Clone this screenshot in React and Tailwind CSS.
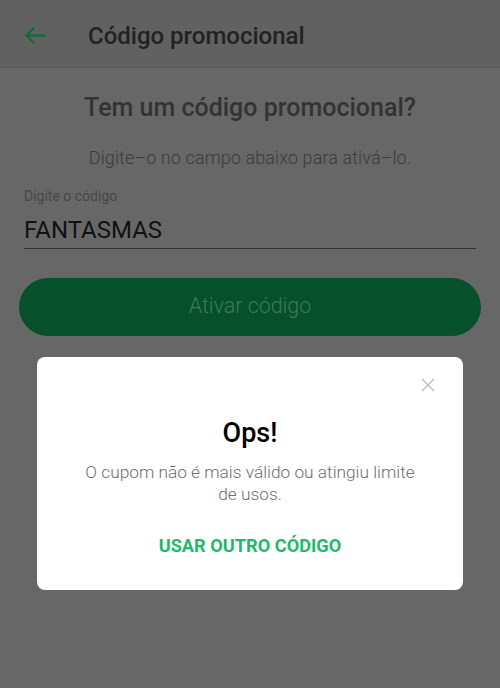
import { X } from "lucide-react";

const App = () => {
  return (
    <div
      className="relative w-[500px] h-[688px] overflow-hidden bg-[#676767]"
      style={{ fontFamily: "Roboto, 'Noto Sans', sans-serif" }}
    >
      {/* Header */}
      <div className="h-[68px] flex items-center bg-[#616161] border-b border-[#5a5a5a]">
        <button className="ml-[21px] mt-[3px] w-[26px] h-[26px] flex items-center justify-center">
          <svg className="w-[25px] h-[25px] text-[#0e6b3d]" viewBox="0 0 24 24" fill="none" stroke="currentColor" strokeWidth={2.2} strokeLinecap="round" strokeLinejoin="round">
            <path d="M21 12H4M11 5l-7 7 7 7" />
          </svg>
        </button>
        <h1 className="ml-[41px] mt-[4px] text-[24px] font-medium text-[#222]">Código promocional</h1>
      </div>

      {/* Content */}
      <div className="px-[24px]">
        <h2 className="mt-[21px] text-center text-[25px] font-medium text-[#333]">Tem um código promocional?</h2>
        <p className="mt-[17px] text-center text-[18px] font-light text-[#3c3c3c] tracking-[0.1px]">Digite–o no campo abaixo para ativá–lo.</p>

        <div className="mt-[15px]">
          <label className="block text-[14px] text-[#474747]">Digite o código</label>
          <div className="mt-[8px] pb-[3px] border-b border-[#333] text-[24px] text-[#111] leading-[30px]">FANTASMAS</div>
        </div>
      </div>

      <div className="px-[19px] mt-[29px]">
        <button className="w-full h-[58px] rounded-full bg-[#06502c] text-[21.4px] font-light text-[#3d7a55]">
          Ativar código
        </button>
      </div>

      {/* Dialog */}
      <div className="absolute left-[37px] top-[357px] w-[426px] h-[233px] bg-white rounded-[8px] flex flex-col items-center">
        <button className="absolute right-[24px] top-[17px] text-[#bdbdbd]">
          <X size={22} strokeWidth={1.5} />
        </button>
        <h3 className="mt-[63px] text-[27px] font-medium text-black leading-none">Ops!</h3>
        <p className="mt-[14px] px-[40px] text-center text-[17.3px] font-light text-[#6e6e6e] leading-[22px]">
          O cupom não é mais válido ou atingiu limite de usos.
        </p>
        <button className="mt-[27px] text-[18.2px] font-bold text-[#22b96b]">USAR OUTRO CÓDIGO</button>
      </div>
    </div>
  );
};

export default App;
